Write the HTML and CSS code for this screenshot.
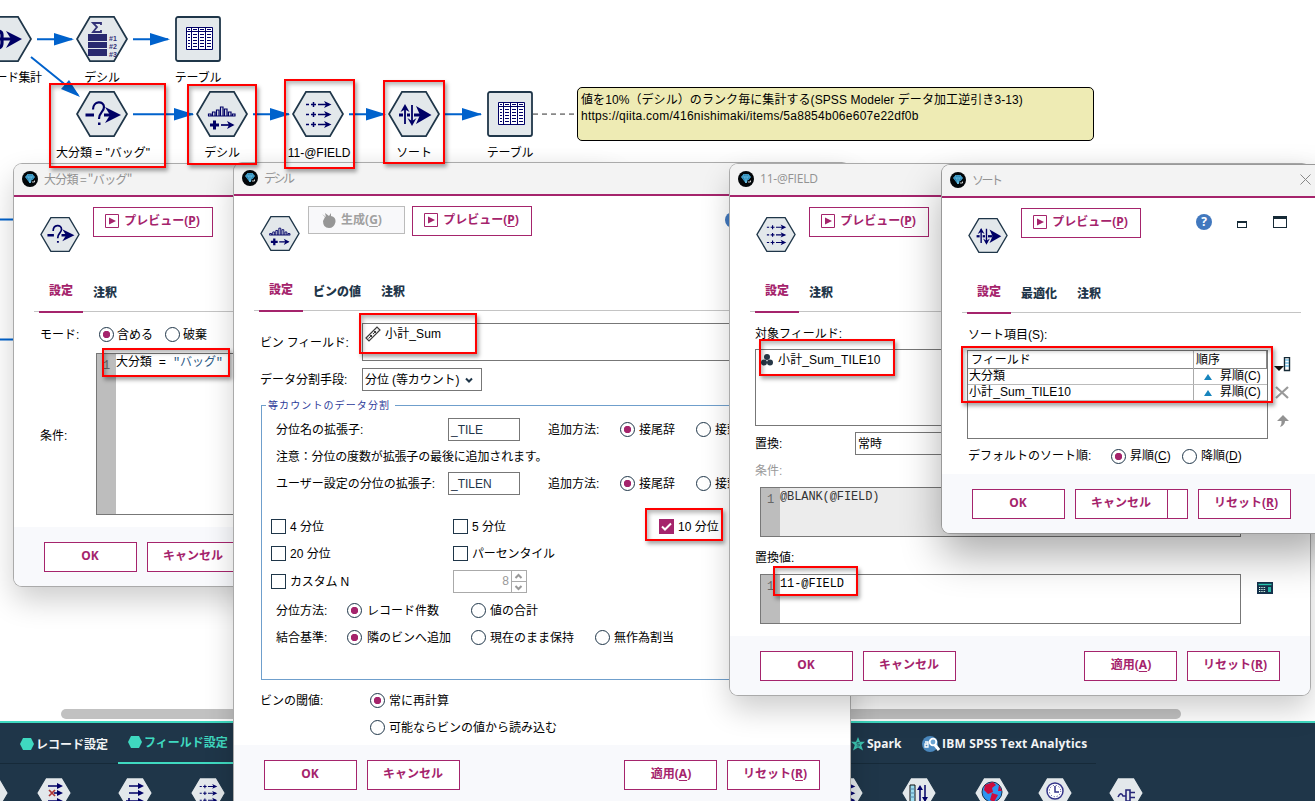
FILE: index.html
```html
<!DOCTYPE html>
<html lang="ja">
<head>
<meta charset="utf-8">
<title>SPSS Modeler</title>
<link rel="stylesheet" href="styles.css">
</head>
<body>
<svg class="defs" width="0" height="0">
  <defs>
    <symbol id="hex" viewBox="0 0 52 46"><path d="M14 .9H38L51 23L38 45.100H14L1 23Z" fill="#e3e8eb" stroke="#1f3649" stroke-width="1.8"/></symbol>
    <symbol id="arrows3" viewBox="0 0 52 46"><g stroke="#000066" stroke-width="1.5" fill="none"><path d="M14 13.500H17M19 13.500H24M21.500 11V16M26 13.500H37M14 23.500H17M19 23.500H24M21.500 21V26M26 23.500H37M14 33.500H17M19 33.500H24M21.500 31V36M26 33.500H37"/></g><path d="M32 10L39.500 13.500L32 17L34 13.500ZM32 20L39.500 23.500L32 27L34 23.500ZM32 30L39.500 33.500L32 37L34 33.500Z" fill="#000066"/></symbol>
    <symbol id="select" viewBox="0 0 52 46"><g fill="none" stroke="#000066"><path d="M9.500 24H18M28 24H37" stroke-width="3"/><path d="M17 18.500C17 9.500 28 9.500 28 16C28 21 23 21 23 28" stroke-width="2.2"/></g><path d="M29 16L45 24L29 32L34 24ZM22 31.500H24.500V34H22Z" fill="#000066"/></symbol>
    <symbol id="bin" viewBox="0 0 52 46"><g fill="none" stroke="#000066"><path stroke-width="1.200" d="M12.500 25V23H15V25M16.500 25V21H19V25M20.500 25V19H23V25M24.500 25V16H27V25M28.500 25V18H31V25M32.500 25V21H35V25M36.500 25V23H39V25M12 25H39.500"/><path d="M14 34H23M18.500 29.500V38.500" stroke-width="3"/><path d="M25 34H37" stroke-width="1.700"/></g><path d="M31 30L38.500 34L31 38L33 34Z" fill="#000066"/></symbol>
    <symbol id="sort" viewBox="0 0 52 46"><g stroke="#000066" fill="none"><path d="M11 24H32" stroke-width="3"/><path d="M17 33V15M24 14V33" stroke="#e3e8eb" stroke-width="4"/><path d="M17 33V15M24 14V33" stroke-width="1.800"/></g><path d="M28 15L43.500 24L28 33L32 24ZM12.500 21L17 13L21.500 21L17 18.500ZM19.500 27L24 35L28.500 27L24 30Z" fill="#000066"/></symbol>
    <symbol id="table" viewBox="0 0 46 46"><rect x="1" y="1" width="44" height="44" rx="2" fill="#e3e8eb" stroke="#1f3649" stroke-width="1.800"/><g stroke="#000066" fill="none"><path fill="#fff" d="M11.500 11.500H37.500V33.500H11.500Z"/><path d="M11 15.500H38M16.500 11V34M23.500 11V34M30.500 11V34"/><path d="M13 13.500H15M18 13.500H22M25 13.500H29M32 13.500H36M13 18.500H15M18 18.500H22M25 18.500H29M32 18.500H36M13 21.500H15M18 21.500H22M25 21.500H29M32 21.500H36M13 24.500H15M18 24.500H22M25 24.500H29M32 24.500H36M13 27.500H15M18 27.500H22M25 27.500H29M32 27.500H36M13 30.500H15M18 30.500H22M25 30.500H29M32 30.500H36"/></g></symbol>
    <symbol id="rank" viewBox="0 0 52 46"><path d="M25 9V7H17L21 11L17 16H25V14" fill="none" stroke="#333377" stroke-width="1.800"/><path fill="#29296f" d="M12 18H31V25H12ZM12 26H31V32H12ZM12 33H31V40H12Z"/><g class="rank-no" fill="#333377"><text x="33" y="24.500">#1</text><text x="33" y="32.500">#2</text><text x="33" y="40.500">#3</text></g></symbol>
    <symbol id="agg" viewBox="0 0 52 46"><path d="M2 15H17Q22 15 22 19V27Q22 32 17 32H2M2 23H34" fill="none" stroke="#000066" stroke-width="3.200"/><path d="M26 15L42 23L26 32L31 23Z" fill="#000066"/></symbol>
    <symbol id="gem" viewBox="0 0 16 16"><circle cx="8" cy="8" r="8" fill="#020609"/><path d="M3.500 6L5.500 3.500H10.500L12.500 6L8 12Z" fill="#1d7fae" stroke="#52b8e8" stroke-width=".7"/><path d="M3.500 6H12.500M5.500 3.500L8 12L10.500 3.500M8 3.500V12" fill="none" stroke="#8ad4f5" stroke-width=".5"/><path d="M9.500 9H13V12H9.500Z" fill="#020609"/><path d="M10 11H12.500V9.500" stroke="#fff" fill="none" stroke-width=".8"/></symbol>
    <symbol id="play" viewBox="0 0 14 14"><path d="M.5 .5H13.500V13.500H.5Z" fill="#fff" stroke="#a5246c"/><path d="M4 3.500L11 7L4 10.500Z" fill="#a5246c"/></symbol>
  </defs>
</svg>
<main class="desktop">
  <svg class="links" width="1315" height="801">
    <g stroke="#0062cc" stroke-width="2" fill="none"><path d="M37 39.200H72M133 39.200H168M31 57L78 95M133 114.200H193M253 114.200H289M349 114.200H385M445 114.200H481M0 219.500H14M0 339.500H14"/></g>
    <path fill="#0062cc" d="M54 33L74 39.200L54 45.500ZM150 33L170 39.200L150 45.500ZM80 97L61 89L69 80ZM174 108L194 114.200L174 120.500ZM270 108L290 114.200L270 120.500ZM366 108L386 114.200L366 120.500ZM462 108L482 114.200L462 120.500Z"/>
    <path d="M533 114.200H576" stroke="#888" stroke-width="1.800" stroke-dasharray="5 4"/>
  </svg>
  <div class="node" style="left:-20px;top:16px"><svg><use href="#hex"/><use href="#agg"/></svg><span class="partial">レコード集計</span></div>
  <div class="node" style="left:76px;top:16px"><svg><use href="#hex"/><use href="#rank"/></svg><span>デシル</span></div>
  <div class="node" style="left:172px;top:16px"><svg><use href="#table"/></svg><span>テーブル</span></div>
  <div class="node" style="left:76px;top:91px"><svg><use href="#hex"/><use href="#select"/></svg><span class="sel">大分類 = "バッグ"</span></div>
  <div class="node" style="left:196px;top:91px"><svg><use href="#hex"/><use href="#bin"/></svg><span>デシル</span></div>
  <div class="node" style="left:292px;top:91px"><svg><use href="#hex"/><use href="#arrows3"/></svg><span class="fname">11-@FIELD</span></div>
  <div class="node" style="left:388px;top:91px"><svg><use href="#hex"/><use href="#sort"/></svg><span>ソート</span></div>
  <div class="node" style="left:484px;top:91px"><svg><use href="#table"/></svg><span>テーブル</span></div>
  <div class="note"><p class="note-a">値を10%（デシル）のランク毎に集計する(SPSS Modeler データ加工逆引き3-13)</p><p class="note-b">https://qiita.com/416nishimaki/items/5a8854b06e607e22df0b</p></div>
  <div class="hscroll"></div>

  <section class="palette">
    <nav class="cats">
      <div class="cat rec"><svg width="14" height="12" viewBox="0 0 14 12"><path d="M3 0H11L14 6L11 12H3L0 6Z" fill="#3fd9c0"/></svg>レコード設定</div>
      <div class="cat fld"><svg width="14" height="12" viewBox="0 0 14 12"><path d="M3 0H11L14 6L11 12H3L0 6Z" fill="#3fd9c0"/></svg>フィールド設定</div>
      <div class="cat spark"><svg width="14" height="14" viewBox="0 0 14 14"><path d="M7 0L9 4.800H14L10.200 8L12 13.500L7 10.500L2 13.500L3.800 8L0 4.800H5Z" fill="#3cc5b1"/><path d="M8.500 5.500H6V7.200H8.300V9H5.500" fill="none" stroke="#1f3649" stroke-width=".6"/></svg>Spark</div>
      <div class="cat ta"><svg width="18" height="16" viewBox="0 0 18 16"><circle cx="8" cy="8" r="8" fill="#4a88be"/><path d="M3 6H6V11H3V8H6" fill="none" stroke="#fff" stroke-width="1.300"/><circle cx="11" cy="6" r="3.300" fill="#6ba4d2" stroke="#fff" stroke-width="1.800"/><path d="M13 9L17 14" stroke="#fff" stroke-width="3"/></svg>IBM SPSS Text Analytics</div>
    </nav>
    <div class="tools">
      <svg style="left:-27px"><use href="#hex"/></svg>
      <svg style="left:36px"><use href="#hex"/><path d="M12 9H24M18 16H25M12 24H24" stroke="#000066" stroke-width="1.300"/><path d="M21 6L27 9L21 12ZM21 13L27 16L21 19ZM21 21L27 24L21 27Z" fill="#000066"/><path d="M13 13L19 19M19 13L13 19" stroke="#aa3333" stroke-width="1.700"/></svg>
      <svg style="left:117px"><use href="#hex"/><path d="M12 9H24M12 16H24M9 24H25M12 21V28" stroke="#000066" stroke-width="1.600"/><path d="M21 6L27 9L21 12ZM21 13L27 16L21 19ZM21 21L27 24L21 27Z" fill="#000066"/></svg>
      <svg style="left:190px"><use href="#hex"/><use href="#arrows3"/></svg>
      <svg style="left:828px"><use href="#hex"/><use href="#arrows3"/></svg>
      <svg style="left:901px"><use href="#hex"/><path d="M9 8H14V28H9Z" fill="#9bdcf0" stroke="#111"/><path d="M9 12H14M9 16H14M9 20H14" stroke="#58a"/><path d="M19 26V10M24 8V24" stroke="#000066" stroke-width="1.500"/><path d="M16 13L19 8L22 13ZM21 20L24 25L27 20Z" fill="#000066"/></svg>
      <svg style="left:974px"><use href="#hex"/><circle cx="18" cy="15" r="10" fill="#2d95f0" stroke="#17324d"/><path d="M11 8L19 5L22 8L18 11L19 15L14 17L10 13ZM18 16L24 18L20 25L16 23ZM25 8L28 14L24 14Z" fill="#cc0c3c"/></svg>
      <svg style="left:1037px"><use href="#hex"/><circle cx="18" cy="14" r="8" fill="#fff" stroke="#333388" stroke-width="1.500"/><circle cx="18" cy="14" r="5.700" fill="none" stroke="#333388" stroke-dasharray="1 2"/><path d="M18 9V15H22M9 25H27" fill="none" stroke="#333388" stroke-width="1.500"/></svg>
      <svg style="left:1108px"><use href="#hex"/><path d="M10 20Q13 14 15 19H18V13H22V24H18V19M22 15.500H27M22 20.500H27" fill="none" stroke="#27277a" stroke-width="1.600"/></svg>
    </div>
  </section>

  <section class="win w1">
    <header><svg class="gem"><use href="#gem"/></svg><h1 class="t1">大分類 = "バッグ"</h1></header>
    <div class="bar"><svg class="wicon"><use href="#hex"/><use href="#select"/></svg><button class="preview"><svg><use href="#play"/></svg>プレビュー(<u>P</u>)</button></div>
    <nav class="tabs"><b class="on">設定</b><b>注釈</b></nav>
    <div class="body">
      <div class="mode"><span>モード:</span><i class="radio on"></i><span>含める</span><i class="radio"></i><span>破棄</span></div>
      <div class="cond"><span>条件:</span><div class="code"><i>1</i><code>大分類 = <em>"バッグ"</em></code></div></div>
    </div>
    <footer><button>OK</button><button>キャンセル</button></footer>
  </section>

  <section class="win w2">
    <header><svg class="gem"><use href="#gem"/></svg><h1 class="narrow">デシル</h1></header>
    <div class="bar"><svg class="wicon"><use href="#hex"/><use href="#bin"/></svg><button class="gen"><svg width="14" height="15" viewBox="0 0 14 15"><path d="M0 1L4 4L3 0L7 3L9 0L9 3Q14 4 13.500 9Q12 15 7 15Q1 15 1 8L3 4Z" fill="#969696"/></svg>生成(<u>G</u>)</button><button class="preview"><svg><use href="#play"/></svg>プレビュー(<u>P</u>)</button><b class="help">?</b></div>
    <nav class="tabs"><b class="on">設定</b><b>ビンの値</b><b>注釈</b></nav>
    <div class="body">
      <div class="binrow"><span class="kn">ビン フィールド:</span><div class="binbox"><svg width="16" height="16" viewBox="0 0 16 16"><path d="M1 12L12 1L15 4L4 15Z" fill="#f3f3f3" stroke="#3c3c3c" stroke-width="1.200"/><path d="M4.500 8.500L7.500 11.500M8.500 4.500L11.500 7.500M3.500 12.500L7 9M8 8L11 5" fill="none" stroke="#3c3c3c"/></svg>小計_Sum</div></div>
      <div class="splitrow"><span>データ分割手段:</span><div class="combo"><span>分位 (等カウント)</span><svg width="8" height="6" viewBox="0 0 8 6"><path d="M1 1.500L4 4.500L7 1.500" fill="none" stroke="#1f3649" stroke-width="2"/></svg></div></div>
      <div class="group"><span class="legend">等カウントのデータ分割</span>
        <div class="grow g1"><span>分位名の拡張子:</span><div class="field">_TILE</div><span>追加方法:</span><i class="radio on"></i><span>接尾辞</span><i class="radio"></i><span>接頭辞</span></div>
        <div class="grow"><span class="hint">注意：分位の度数が拡張子の最後に追加されます。</span></div>
        <div class="grow g1"><span>ユーザー設定の分位の拡張子:</span><div class="field">_TILEN</div><span>追加方法:</span><i class="radio on"></i><span>接尾辞</span><i class="radio"></i><span>接頭辞</span></div>
        <div class="checks">
          <label><i class="chk"></i>4 分位</label><label><i class="chk"></i>5 分位</label><label><i class="chk on"><svg width="15" height="15" viewBox="0 0 15 15"><path d="M3 7.500L6 10.500L12 4.500" fill="none" stroke="#fff" stroke-width="2"/></svg></i>10 分位</label>
          <label><i class="chk"></i>20 分位</label><label><i class="chk"></i><span class="pct">パーセンタイル</span></label><span></span>
          <label><i class="chk"></i><span class="pct">カスタム N</span></label><div class="spin"><span>8</span><svg width="15" height="22" viewBox="0 0 15 22"><path d="M.5 0V22M0 10.500H15" stroke="#aaa"/><path d="M4.500 7L7.500 4L10.500 7M4.500 15L7.500 18L10.500 15" fill="none" stroke="#999" stroke-width="2"/></svg></div>
        </div>
        <div class="grow g2 first"><span>分位方法:</span><i class="radio on"></i><span>レコード件数</span><i class="radio"></i><span>値の合計</span></div>
        <div class="grow g2"><span>結合基準:</span><i class="radio on"></i><span>隣のビンへ追加</span><i class="radio"></i><span>現在のまま保持</span><i class="radio"></i><span>無作為割当</span></div>
      </div>
      <div class="thr"><span>ビンの閾値:</span><i class="radio on"></i><span>常に再計算</span><b></b><i class="radio"></i><span>可能ならビンの値から読み込む</span></div>
    </div>
    <footer><button>OK</button><button>キャンセル</button><button class="push">適用(<u>A</u>)</button><button class="reset">リセット(<u>R</u>)</button></footer>
  </section>

  <section class="win w3">
    <header><svg class="gem"><use href="#gem"/></svg><h1 class="lat">11-@FIELD</h1></header>
    <div class="bar"><svg class="wicon"><use href="#hex"/><use href="#arrows3"/></svg><button class="preview"><svg><use href="#play"/></svg>プレビュー(<u>P</u>)</button></div>
    <nav class="tabs"><b class="on">設定</b><b>注釈</b></nav>
    <div class="body">
      <span class="lab l1">対象フィールド:</span>
      <div class="fields"><svg width="12" height="12" viewBox="0 0 12 12"><g fill="#263746"><circle cx="6" cy="3" r="3"/><circle cx="3" cy="8.500" r="3"/><circle cx="9" cy="8.500" r="3"/></g></svg>小計_Sum_TILE10</div>
      <div class="repl"><span>置換:</span><div>常時</div></div>
      <span class="lab l2">条件:</span>
      <div class="code off"><i>1</i><code>@BLANK(@FIELD)</code></div>
      <span class="lab l3">置換値:</span>
      <div class="calcrow"><div class="code"><i>1</i><code>11-@FIELD</code></div><svg width="16" height="12" viewBox="0 0 16 12"><path d="M0 0H16V12H0Z" fill="#16324c"/><path d="M1.500 2.500H14.500" stroke="#27c8b0" stroke-width="1.400"/><path d="M2 5.500H9M2 7.500H9M2 9.500H9" stroke="#dfe" stroke-dasharray="1.300 1"/><path d="M11 5H14V10H11Z" fill="#27b8a8"/></svg></div>
    </div>
    <footer><button>OK</button><button>キャンセル</button><button class="push">適用(<u>A</u>)</button><button class="reset">リセット(<u>R</u>)</button></footer>
  </section>

  <section class="win w4">
    <header><svg class="gem"><use href="#gem"/></svg><h1 class="narrow">ソート</h1><svg class="close" width="11" height="11" viewBox="0 0 11 11"><path d="M.5 .5L10.500 10.500M10.500 .5L.5 10.500" stroke="#888"/></svg></header>
    <div class="bar"><svg class="wicon"><use href="#hex"/><use href="#sort"/></svg><button class="preview"><svg><use href="#play"/></svg>プレビュー(<u>P</u>)</button><b class="help">?</b><i class="min"></i><i class="max"></i></div>
    <nav class="tabs"><b class="on">設定</b><b>最適化</b><b>注釈</b></nav>
    <div class="body">
      <span class="slab">ソート項目(S):</span>
      <div class="sortrow"><div class="grid">
        <div class="gr h"><span>フィールド</span><span>順序</span></div>
        <div class="gr"><span>大分類</span><span><svg width="8" height="6"><path d="M4 0L8 6H0Z" fill="#1785bd"/></svg>昇順(C)</span></div>
        <div class="gr"><span class="fname">小計_Sum_TILE10</span><span><svg width="8" height="6"><path d="M4 0L8 6H0Z" fill="#1785bd"/></svg>昇順(C)</span></div>
      </div>
      <svg class="side" width="18" height="75" viewBox="0 0 18 75"><path d="M10.500 .5H15.500V13.500H10.500Z" fill="#fff" stroke="#162a36" stroke-width="1.400"/><path d="M11 3H15M11 6H15M11 9H15" stroke="#39a0d5"/><path d="M0 9H10L5 14Z" fill="#111"/><path d="M2 30L14 41M14 30L2 41" stroke="#999" stroke-width="2.200"/><path d="M9 58L15 64H11Q11 68 6 70Q8 67 7.500 64H3Z" fill="#929292"/></svg></div>
      <div class="defrow"><span>デフォルトのソート順:</span><i class="radio on"></i><span>昇順(<u>C</u>)</span><i class="radio"></i><span>降順(<u>D</u>)</span></div>
    </div>
    <footer><button>OK</button><button>キャンセル</button><button class="split" aria-label="オプション"></button><button class="reset">リセット(<u>R</u>)</button></footer>
  </section>

  <div class="mark" style="left:49px;top:83px;width:117px;height:85px"></div>
  <div class="mark" style="left:187px;top:84px;width:70px;height:81px"></div>
  <div class="mark" style="left:284px;top:79px;width:71px;height:90px"></div>
  <div class="mark" style="left:383px;top:80px;width:62px;height:84px"></div>
  <div class="mark" style="left:102px;top:348px;width:128px;height:29px"></div>
  <div class="mark" style="left:359px;top:313px;width:118px;height:41px"></div>
  <div class="mark" style="left:645px;top:508px;width:78px;height:33px"></div>
  <div class="mark" style="left:759px;top:339px;width:136px;height:37px"></div>
  <div class="mark" style="left:773px;top:566px;width:85px;height:30px"></div>
  <div class="mark" style="left:961px;top:346px;width:312px;height:57px"></div>
</main>
</body>
</html>
```
FILE: styles.css
```css
* { box-sizing: border-box; margin: 0; padding: 0; }
body { font: 12px/16px "Liberation Sans", "Noto Sans CJK JP", sans-serif; color: #000; }
i, em { font-style: normal; }
svg { flex: none; display: block; }
.defs { position: absolute; }
.desktop { position: relative; width: 1315px; height: 801px; overflow: hidden; background: #fff; white-space: nowrap; }
.links { position: absolute; }
.node { position: absolute; width: 52px; display: flex; flex-direction: column; align-items: center; gap: 8px; }
.node svg { width: 52px; height: 46px; }
.node span { letter-spacing: -.2px; }
.node .partial { letter-spacing: -.5px; margin-left: 2px; }
.node .sel { letter-spacing: 0; margin-left: 2px; }
.node .fname { letter-spacing: 0; margin-left: 2px; }
.rank-no { font: bold 7px "Liberation Sans", sans-serif; }
.note { position: absolute; left: 577px; top: 87px; width: 517px; height: 54px; padding: 4px 3px; background: #eeebb4; border: 1px solid #000; border-radius: 5px; }
.note-a { letter-spacing: .08px; }
.note-b { letter-spacing: .26px; }
.hscroll { position: absolute; left: 61px; top: 709px; width: 1120px; height: 10px; border-radius: 5px; background: #c1c1c1; }

.palette { position: absolute; left: 0; top: 721px; width: 100%; height: 80px; background: #1f3649; border-top: 2px solid #3fd9c0; }
.cats { position: relative; width: 1096px; height: 41px; border-bottom: 1px solid #162a39; color: #f2f4f5; font: bold 12px "Open Sans", "Noto Sans CJK JP", sans-serif; }
.cat { position: absolute; top: 0; height: 41px; display: flex; align-items: center; gap: 2px; }
.rec { left: 20px; }
.fld { left: 118px; width: 200px; padding: 0 0 2px 10px; color: #3fd9c0; border-bottom: 2px solid #3fd9c0; }
.spark { left: 851px; }
.ta { left: 922px; letter-spacing: .18px; }
.tools { position: relative; height: 39px; overflow: hidden; }
.tools svg { position: absolute; top: 13px; width: 36px; height: 32px; overflow: hidden; }

.win { position: absolute; display: flex; flex-direction: column; background: #fff; border-radius: 8px; box-shadow: 0 0 0 1px #aaa, 0 14px 30px rgba(0,0,0,.2); overflow: visible; }
.w1 { left: 14px; top: 164px; width: 600px; height: 422px; }
.w2 { left: 234px; top: 163px; width: 616px; height: 650px; }
.w3 { left: 730px; top: 164px; width: 580px; height: 531px; }
.w4 { left: 942px; top: 165px; width: 390px; height: 368px; box-shadow: 0 0 0 1px #999, 0 22px 42px rgba(0,0,0,.33); }
.win header { flex: none; height: 33px; display: flex; align-items: center; gap: 6px; padding: 0 8px 2px; background: #f3f3f3; border-bottom: 2px solid #a5246c; border-radius: 8px 8px 0 0; }
.gem { width: 16px; height: 16px; }
h1 { font: 12px/16px "Noto Sans CJK JP", sans-serif; color: #929292; }
.t1 { letter-spacing: -.7px; }
.narrow { letter-spacing: -2.5px; }
.lat { font-family: "Open Sans", sans-serif; letter-spacing: -.2px; }
.close { margin-left: auto; margin-right: 13px; }
.bar { flex: none; height: 80px; padding: 10px 0 0 26px; display: flex; align-items: flex-start; }
.wicon { width: 40px; height: 35px; margin: 10px 13px 0 0; }
button { height: 30px; width: 93px; display: flex; align-items: center; justify-content: center; font: bold 12px/16px "Noto Sans", "Noto Sans CJK JP", sans-serif; color: #a5246c; background: #fff; border: 1px solid #a5246c; padding: 0 1px 2px 0; }
.reset { padding-left: 4px; }
.preview { width: 120px; gap: 0; }
.preview svg { width: 14px; height: 14px; margin-right: 5px; }
u { text-underline-offset: 2px; }
.gen { width: 97px; height: 28px; color: #a0a0a0; border-color: #bbb; background: #f8f8fa; margin: 0 7px 0 -5px; padding: 0 9px 0 0; }
.gen svg { margin-right: 5px; }
.help { width: 16px; height: 16px; margin-top: 6px; border-radius: 8px; color: #fff; background: #4178be; font: bold 12px/16px "Open Sans", sans-serif; text-align: center; }
.w2 .help { margin-left: 193px; }
.w4 .help { margin-left: 55px; }
.min { width: 10px; height: 7px; border: 1px solid #162a36; border-top-width: 2px; margin: 13px 0 0 25px; }
.max { width: 14px; height: 12px; border: 1px solid #162a36; border-top-width: 3px; margin: 8px 0 0 26px; }
.tabs { flex: none; height: 36px; margin: 0 14px 0 20px; padding-left: 5px; display: flex; font: bold 12px/16px "Noto Sans CJK JP", sans-serif; color: #1f3649; background: linear-gradient(#c4c4c4, #c4c4c4) 0 34px / 100% 1px no-repeat; }
.w4 .tabs { margin-right: 31px; }
.tabs b { padding: 7px 10px 0; }
.tabs .on { padding-top: 5px; border-bottom: 2px solid #a5246c; color: #a5246c; }
.body { flex: 1; min-height: 0; }
.win footer { flex: none; height: 59px; display: flex; gap: 10px; padding: 15px 30px 0; background: #f8f9fc; border-radius: 0 0 8px 8px; }
.push { margin-left: auto; padding-left: 2px; }
.split { width: 21px; margin-left: -11px; }
.w2 footer { height: 68px; }
.radio { flex: none; width: 15px; height: 15px; border: 1px solid #1f3649; border-radius: 50%; background: #fff; }
.radio.on { background: radial-gradient(circle, #a5246c 3.4px, #fff 4px); }
.kn { letter-spacing: -.2px; }

.mode { height: 21px; margin-top: 11px; padding-left: 26px; display: grid; grid-template-columns: 59px 18px 48px 18px auto; align-items: center; }
.cond { height: 162px; margin-top: 8px; padding-left: 26px; display: grid; grid-template-columns: 56px 462px; align-items: center; }
.cond > span { padding-top: 4px; }
.code { align-self: stretch; border: 1px solid #777; display: flex; background: #fff; }
.code i { width: 19px; background: #bdbdbd; color: #666; font: 12px/24px "Liberation Mono", monospace; padding-left: 6px; }
.code code { font: 12px/19px "Liberation Mono", "Noto Sans CJK JP", monospace; letter-spacing: -.1px; }
.code em { color: #2d5a84; }

.binrow { height: 38px; margin-top: 11px; padding-left: 26px; display: grid; grid-template-columns: 102px 468px; align-items: center; }
.binrow > span { padding-top: 2px; }
.binbox { align-self: stretch; border: 1px solid #777; display: flex; gap: 4px; padding: 2px; letter-spacing: .15px; }
.splitrow { height: 23px; margin-top: 7px; padding-left: 26px; display: grid; grid-template-columns: 102px 120px; align-items: center; }
.combo { height: 23px; border: 1px solid #777; padding: 0 8px 0 2px; display: flex; align-items: center; justify-content: space-between; letter-spacing: -.1px; }
.group { position: relative; height: 275px; margin: 14px 20px 0 27px; border: 1px solid #6f9fcc; padding: 10px 0 0 14px; }
.legend { position: absolute; left: 4px; top: -8px; padding: 0 5px 0 2px; background: #fff; color: #2c3a99; font-size: 10px; letter-spacing: 1.1px; }
.grow { height: 27px; display: flex; align-items: center; }
.hint { letter-spacing: -.15px; }
.g1 { display: grid; grid-template-columns: 172px 100px 72px 19px 57px 19px auto; }
.field { width: 72px; height: 23px; border: 1px solid #777; padding: 3px 2px; color: #1f3649; }
.checks { margin: 16px 0 0 -5px; display: grid; grid-template-columns: 182px 206px auto; grid-template-rows: 27px 27px 29px; align-items: center; }
.checks label { display: flex; align-items: center; gap: 4px; }
.pct { letter-spacing: -.15px; }
.chk { width: 15px; height: 15px; border: 1px solid #1f3649; }
.chk.on { border: 0; background: #a5246c; }
.spin { width: 74px; height: 23px; border: 1px solid #aaa; display: flex; justify-content: flex-end; line-height: 21px; color: #999; gap: 2px; }
.g2 { display: grid; grid-template-columns: 71px 20px 104px 19px 105px 19px auto; }
.first { margin-top: 1px; }
.thr { margin-top: 7px; padding-left: 26px; display: grid; grid-template-columns: 110px 19px auto; grid-auto-rows: 27px; align-items: center; }

.lab { display: block; margin-left: 25px; height: 16px; }
.l1 { margin-top: 13px; margin-bottom: 7px; }
.fields { height: 77px; margin: 0 20px 0 25px; border: 1px solid #777; display: flex; gap: 5px; padding: 2px 5px; letter-spacing: .15px; }
.fields svg { margin-top: 2px; }
.repl { height: 23px; margin: 6px 20px 0 25px; display: grid; grid-template-columns: 100px 1fr; align-items: center; }
.repl div { height: 23px; border: 1px solid #777; padding: 3px 2px; }
.l2 { margin-top: 8px; color: #999; }
.w3 .code { width: 481px; height: 50px; margin-left: 30px; }
.off { margin-top: 8px; background: #ececec !important; color: #333; }
.l3 { margin-top: 13px; margin-bottom: 8px; }
.calcrow { display: flex; gap: 16px; }
.calcrow svg { margin-top: 8px; }

.slab { display: block; margin: 13px 0 0 26px; height: 16px; }
.sortrow { margin: 7px 0 0 25px; display: flex; gap: 6px; }
.side { margin-top: 7px; }
.grid { width: 301px; height: 89px; border: 1px solid #777; background: #fff; }
.gr { width: 299px; height: 16px; display: grid; grid-template-columns: 225px 74px; border-bottom: 1px solid #bbb; line-height: 15px; }
.gr.h { height: 18px; line-height: 19px; border-bottom: 1px solid #888; border-right: 1px solid #888; }
.gr.h span:first-child { padding-left: 3px; }
.gr span { padding-left: 1px; }
.gr .fname { letter-spacing: .1px; }
.gr span + span { border-left: 1px solid #aaa; padding-left: 2px; display: flex; align-items: center; }
.gr span + span svg { margin: 0 8px; }
.defrow { margin-top: 7px; padding-left: 26px; height: 20px; display: grid; grid-template-columns: 143px 19px 52px 19px auto; align-items: center; }
.mark { position: absolute; border: 2px solid #f00; box-shadow: 2px 3px 4px rgba(0,0,0,.35), inset 2px 3px 4px rgba(0,0,0,.28); }
```
